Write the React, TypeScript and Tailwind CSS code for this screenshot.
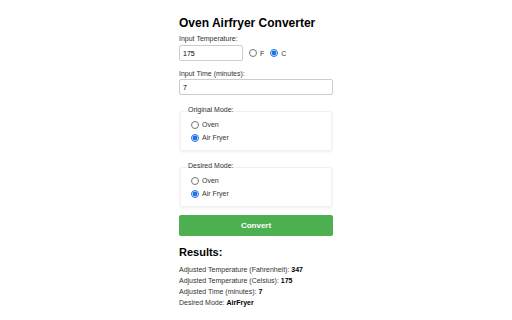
import { useState } from 'react'

function Radio({ checked, label, onChange }: { checked: boolean; label: string; onChange: () => void }) {
  return (
    <label className="flex h-[9px] items-center gap-[3px]">
      <input type="radio" checked={checked} onChange={onChange} className="m-0 h-[8px] w-[8px] accent-[#1a73e8]" />
      <span>{label}</span>
    </label>
  )
}

function ModeBox({ title, value, onChange }: { title: string; value: string; onChange: (v: string) => void }) {
  return (
    <div>
      <div className="relative mb-[-3px] pl-[9px] leading-[8px]">{title}</div>
      <div className="ml-[1px] flex w-[152px] flex-col gap-[4px] rounded-[2px] border border-[#f1f1f1] px-[10px] pb-[8px] pt-[8px] shadow-[0_1px_3px_rgba(0,0,0,0.07)]">
        <Radio checked={value === 'Oven'} label="Oven" onChange={() => onChange('Oven')} />
        <Radio checked={value === 'AirFryer'} label="Air Fryer" onChange={() => onChange('AirFryer')} />
      </div>
    </div>
  )
}

export default function App() {
  const [temp, setTemp] = useState('175')
  const [unit, setUnit] = useState('C')
  const [time, setTime] = useState('7')
  const [orig, setOrig] = useState('AirFryer')
  const [desired, setDesired] = useState('AirFryer')

  return (
    <div className="min-h-[320px] w-[512px] bg-white text-[7px] leading-[9px] text-[#333] font-['Liberation_Sans',Arial,sans-serif]">
      <div className="mx-auto w-[154px] pt-[16px]">
        <h1 className="text-[12px] font-bold leading-[14px] text-black">Oven Airfryer Converter</h1>
        <div className="mt-[4px]">Input Temperature:</div>
        <div className="mt-[2px] flex items-center gap-[6px]">
          <input
            value={temp}
            onChange={e => setTemp(e.target.value)}
            className="h-[16px] w-[64px] rounded-[2px] border border-[#ccc] px-[3px] text-[7px] text-black outline-none"
          />
          <label className="flex items-center gap-[3px]">
            <input type="radio" checked={unit === 'F'} onChange={() => setUnit('F')} className="m-0 h-[8px] w-[8px] accent-[#1a73e8]" />
            F
          </label>
          <label className="flex items-center gap-[3px]">
            <input type="radio" checked={unit === 'C'} onChange={() => setUnit('C')} className="m-0 h-[8px] w-[8px] accent-[#1a73e8]" />
            C
          </label>
        </div>
        <div className="mt-[8px]">Input Time (minutes):</div>
        <input
          value={time}
          onChange={e => setTime(e.target.value)}
          className="mt-[1px] block h-[16px] w-[154px] rounded-[2px] border border-[#ccc] px-[3px] text-[7px] text-black outline-none"
        />
        <div className="mt-[11px] flex flex-col gap-[11px]">
          <ModeBox title="Original Mode:" value={orig} onChange={setOrig} />
          <ModeBox title="Desired Mode:" value={desired} onChange={setDesired} />
        </div>
        <button className="mt-[8px] block h-[21px] w-[154px] rounded-[2px] bg-[#4caf50] text-[8px] font-bold text-white">
          Convert
        </button>
        <h2 className="mt-[10px] text-[11px] font-bold leading-[13px] text-black">Results:</h2>
        <div className="mt-[6px] flex flex-col gap-[2px]">
          <div>Adjusted Temperature (Fahrenheit): <b className="text-black">347</b></div>
          <div>Adjusted Temperature (Celsius): <b className="text-black">175</b></div>
          <div>Adjusted Time (minutes): <b className="text-black">7</b></div>
          <div>Desired Mode: <b className="text-black">AirFryer</b></div>
        </div>
      </div>
    </div>
  )
}
